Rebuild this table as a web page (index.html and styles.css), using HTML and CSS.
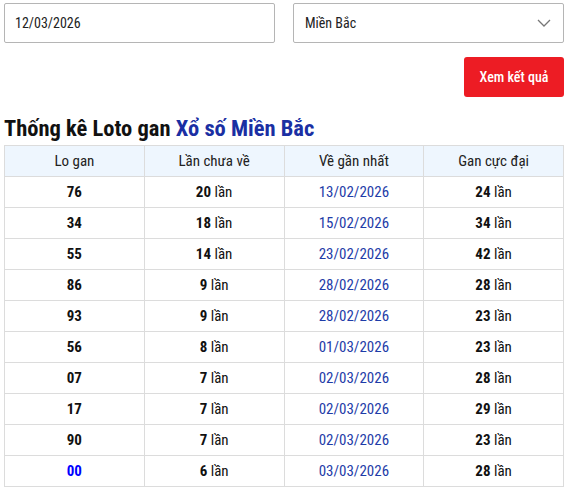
FILE: index.html
```html
<!DOCTYPE html>
<html lang="vi">
<head>
<meta charset="utf-8">
<link rel="stylesheet" href="styles.css">
</head>
<body>
<div class="page">
  <div class="filters">
    <div class="field">12/03/2026</div>
    <div class="field select">
      <span>Miền Bắc</span>
      <svg class="chev" width="14" height="8" viewBox="0 0 14 8"><path d="M1 1l6 6 6-6" fill="none" stroke="#777" stroke-width="1.3"/></svg>
    </div>
  </div>
  <div class="actions"><button class="btn">Xem kết quả</button></div>
  <h2 class="title">Thống kê Loto gan <span class="blue">Xổ số Miền Bắc</span></h2>
  <table class="tbl">
    <thead>
      <tr><th>Lo gan</th><th>Lần chưa về</th><th>Về gần nhất</th><th>Gan cực đại</th></tr>
    </thead>
    <tbody>
      <tr><td><b>76</b></td><td><b>20</b> lần</td><td class="date">13/02/2026</td><td><b>24</b> lần</td></tr>
      <tr><td><b>34</b></td><td><b>18</b> lần</td><td class="date">15/02/2026</td><td><b>34</b> lần</td></tr>
      <tr><td><b>55</b></td><td><b>14</b> lần</td><td class="date">23/02/2026</td><td><b>42</b> lần</td></tr>
      <tr><td><b>86</b></td><td><b>9</b> lần</td><td class="date">28/02/2026</td><td><b>28</b> lần</td></tr>
      <tr><td><b>93</b></td><td><b>9</b> lần</td><td class="date">28/02/2026</td><td><b>23</b> lần</td></tr>
      <tr><td><b>56</b></td><td><b>8</b> lần</td><td class="date">01/03/2026</td><td><b>23</b> lần</td></tr>
      <tr><td><b>07</b></td><td><b>7</b> lần</td><td class="date">02/03/2026</td><td><b>28</b> lần</td></tr>
      <tr><td><b>17</b></td><td><b>7</b> lần</td><td class="date">02/03/2026</td><td><b>29</b> lần</td></tr>
      <tr><td><b>90</b></td><td><b>7</b> lần</td><td class="date">02/03/2026</td><td><b>23</b> lần</td></tr>
      <tr><td><b class="hot">00</b></td><td><b>6</b> lần</td><td class="date">03/03/2026</td><td><b>28</b> lần</td></tr>
    </tbody>
  </table>
</div>
</body>
</html>
```

FILE: styles.css
```css
* { box-sizing: border-box; }
html, body { margin: 0; padding: 0; background: #fff; }
body { font-family: "Roboto Condensed", Roboto, "Noto Sans", sans-serif; font-stretch: condensed; color: #111; font-size: 14px; }
.page { padding: 3px 3px 0 4px; }
.filters { display: grid; grid-template-columns: 1fr 1fr; column-gap: 18px; }
.field { height: 40px; border: 1px solid #b5b5b5; border-radius: 2px; display: flex; align-items: center; padding: 0 10px; font-size: 14px; color: #222; }
.select { justify-content: space-between; padding-left: 11px; padding-right: 12px; }
.actions { display: flex; justify-content: flex-end; margin-top: 14px; }
.btn { width: 100px; height: 40px; border: 0; border-radius: 3px; background: #ed1c24; color: #fff; font-family: inherit; font-stretch: condensed; font-size: 14px; font-weight: 500; }
.title { margin: 18px 0 4px; font-size: 22.5px; font-weight: 700; line-height: 26px; color: #111; }
.blue { color: #1a2fa3; }
.tbl { width: 100%; border-collapse: collapse; table-layout: fixed; }
.tbl th, .tbl td { border: 1px solid #dcdcdc; height: 31px; text-align: center; padding: 0; font-size: 15px; }
.tbl th { background: #eef6fe; font-weight: 400; color: #222; }
.tbl td { color: #111; }
.tbl b { font-weight: 700; color: #111; }
.tbl .date { color: #1e3ca8; }
.tbl b.hot { color: #0000ff; }
```
